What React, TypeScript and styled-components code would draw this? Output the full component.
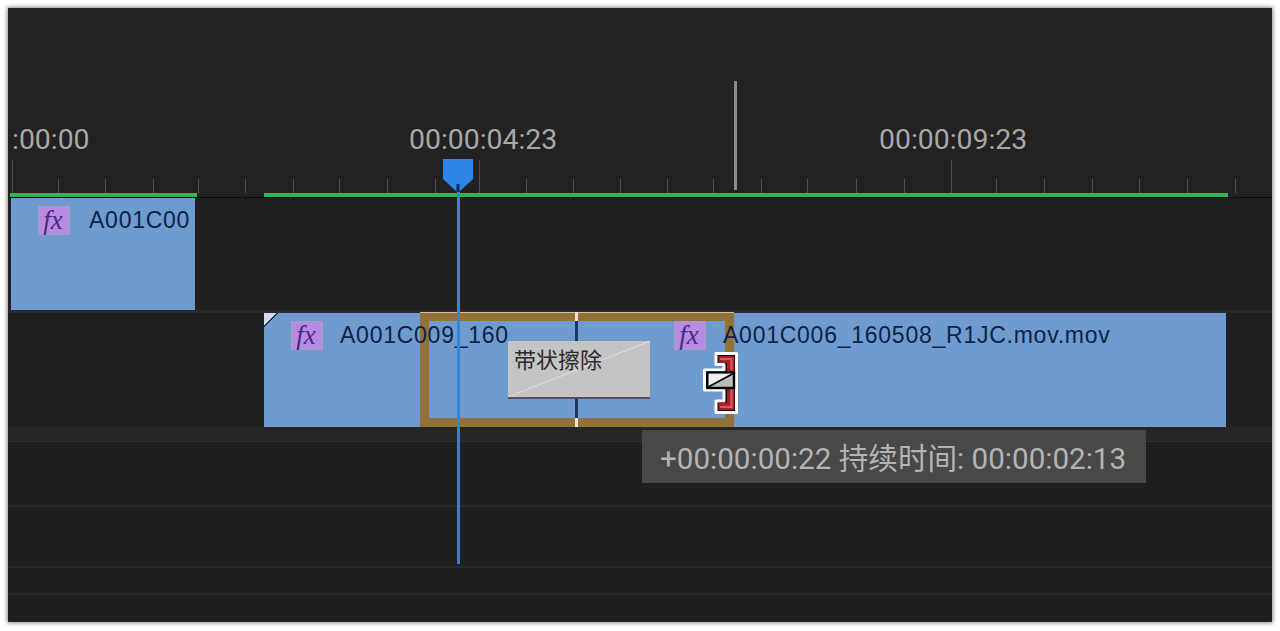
import React from 'react'
import styled, { createGlobalStyle } from 'styled-components'

const UI_FONT = '"Roboto", "Noto Sans CJK SC", sans-serif'
// ruler ticks are not quite even in the source, so keep their real x
const TICK_XS = [
    12, 58, 105, 153, 198, 245, 293, 339, 387, 435, 479, 526, 573, 620, 667, 713, 761, 807, 856, 904, 951, 996, 1044,
    1092, 1139, 1187, 1235,
]
const MAJOR_TICKS = [0, 10, 20]

const App = () => (
    <>
        <GlobalStyle />
        <Frame>
            <Ruler>
                <TimeLabel $left={4}>:00:00</TimeLabel>
                <TimeLabel $left={401}>00:00:04:23</TimeLabel>
                <TimeLabel $left={871}>00:00:09:23</TimeLabel>
                <Marker />
                <Ticks>
                    {TICK_XS.map((x, i) => (
                        <Tick key={x} $major={MAJOR_TICKS.includes(i)} $gap={i ? x - TICK_XS[i - 1] - 1 : 0} />
                    ))}
                </Ticks>
                <RenderBar>
                    <RenderSegment $width={187} />
                    <RenderSegment $width={964} $gap={67} />
                </RenderBar>
            </Ruler>

            <VideoTrack $height={115} $divider>
                <Clip $left={3} $width={184} $height={112}>
                    <ClipHead $gap={19}>
                        <FxBadge>fx</FxBadge>
                        <ClipName>A001C00</ClipName>
                    </ClipHead>
                </Clip>
            </VideoTrack>

            <VideoTrack $height={114}>
                <Clip $left={256} $width={384} $height={114} $cut>
                    <ClipHead $gap={17}>
                        <FxBadge>fx</FxBadge>
                        <ClipName>A001C009_160</ClipName>
                    </ClipHead>
                </Clip>
                <Clip $left={639} $width={579} $height={114}>
                    <ClipHead $gap={17}>
                        <FxBadge>fx</FxBadge>
                        <ClipName>A001C006_160508_R1JC.mov.mov</ClipName>
                    </ClipHead>
                </Clip>
                <Transition>
                    <CutTick $edge="top" />
                    <CutLine />
                    <CutTick $edge="bottom" />
                    <TransitionCard>
                        <TransitionName>带状擦除</TransitionName>
                    </TransitionCard>
                </Transition>
            </VideoTrack>

            <AudioGutter />
            <AudioTrack $height={65} />
            <AudioTrack $height={61} />
            <AudioTrack $height={27} />
            <AudioTrack $height={28} />

            <Playhead>
                <PlayheadHead viewBox="0 0 30 33" aria-hidden>
                    <path d="M0 0H30V20L16 33H14L0 20Z" fill="#2d86e6" />
                    <rect x="13.5" y="25" width="3" height="8" fill="#0b2a66" />
                </PlayheadHead>
                <PlayheadLine />
            </Playhead>

            <TrimCursor viewBox="0 0 36 62" aria-hidden>
                <path
                    d="M13 1.5H33.5V60.5H13V49H21V38H1.5V18H21V12.5H13Z"
                    fill="#000"
                    stroke="#fff"
                    strokeWidth="3"
                    strokeLinejoin="round"
                />
                <path d="M15.5 4H31.5V58H15.5V50.5H24V11H15.5Z" fill="#a3212b" />
                <path d="M17 7H28.5V18M28.5 37V55H17" fill="none" stroke="#e0565c" strokeWidth="2.2" />
                <rect x="4.5" y="20.5" width="26.5" height="15.5" fill="#bdbdbd" stroke="#000" strokeWidth="2.4" />
                <path d="M5.7 21.7H29.8L5.7 34.8Z" fill="#f0f0f0" />
                <path d="M5.7 34.8L29.8 21.7" stroke="#000" strokeWidth="1.6" />
            </TrimCursor>

            <DurationTip>+00:00:00:22 持续时间: 00:00:02:13</DurationTip>
        </Frame>
    </>
)

const GlobalStyle = createGlobalStyle`
    html,
    body {
        margin: 0;
        padding: 0;
        background: #fff;
    }
`
const Frame = styled.div`
    position: relative;
    box-sizing: border-box;
    display: flex;
    flex-direction: column;
    width: 1264px;
    height: 614px;
    margin: 8px;
    overflow: hidden;
    background: #222;
    box-shadow: 0 0 4px 1px #8c8c8c;
    font-family: ${UI_FONT};
`
const Ruler = styled.div`
    position: relative;
    flex: none;
    display: flex;
    flex-direction: column;
    justify-content: flex-end;
    height: 190px;
    box-sizing: border-box;
    border-bottom: 1px solid #0c0c0c;
`
const TimeLabel = styled.span<{ $left: number }>`
    position: absolute;
    left: ${(p) => p.$left}px;
    top: 114px;
    font-size: 28.4px;
    line-height: 36px;
    color: #a8a8a8;
    white-space: nowrap;
`
const Ticks = styled.div`
    display: flex;
    align-items: flex-end;
    height: 33px;
    margin-left: 4px;
`
const Tick = styled.i<{ $major: boolean; $gap: number }>`
    display: block;
    flex: none;
    width: 1px;
    height: ${(p) => (p.$major ? 33 : 14)}px;
    margin-left: ${(p) => p.$gap}px;
    background: #505050;
`
const RenderBar = styled.div`
    display: flex;
    height: 4px;
    padding-left: 2px;
`
const RenderSegment = styled.div<{ $width: number; $gap?: number }>`
    width: ${(p) => p.$width}px;
    margin-left: ${(p) => p.$gap ?? 0}px;
    background: #27ba50;
`
const Marker = styled.div`
    position: absolute;
    left: 726px;
    top: 73px;
    width: 3px;
    height: 109px;
    background: #8b8b8b;
`
const VideoTrack = styled.div<{ $height: number; $divider?: boolean }>`
    position: relative;
    flex: none;
    box-sizing: border-box;
    height: ${(p) => p.$height}px;
    background: #202020;
    box-shadow: ${(p) => (p.$divider ? 'inset 0 -3px 0 #2a2a2a' : 'none')};
`
const Clip = styled.div<{ $left: number; $width: number; $height: number; $cut?: boolean }>`
    position: absolute;
    left: ${(p) => p.$left}px;
    top: 0;
    width: ${(p) => p.$width}px;
    height: ${(p) => p.$height}px;
    background: ${(p) =>
        p.$cut
            ? 'linear-gradient(135deg, #d3dae3 0 8.5px, #1d3553 8.5px 10px, #6f9bcf 10px)'
            : '#6f9bcf'};
`
const ClipHead = styled.div<{ $gap: number }>`
    position: relative;
    z-index: 2;
    display: flex;
    align-items: center;
    gap: ${(p) => p.$gap}px;
    height: 29px;
    padding: 8px 0 0 27px;
`
const FxBadge = styled.span`
    box-sizing: border-box;
    display: flex;
    align-items: center;
    justify-content: center;
    width: 32px;
    height: 29px;
    padding-right: 2px;
    border: 2px solid #ac97d0;
    background: #b88be2;
    color: #4a2a85;
    font-family: 'Liberation Serif', serif;
    font-style: italic;
    font-size: 27px;
    line-height: 1;
`
const ClipName = styled.span`
    font-family: 'Liberation Sans', sans-serif;
    font-size: 23px;
    line-height: 29px;
    letter-spacing: 0.75px;
    color: #0c2348;
    white-space: nowrap;
`
const Transition = styled.div`
    position: absolute;
    z-index: 1;
    left: 412px;
    top: 0;
    box-sizing: border-box;
    width: 314px;
    height: 114px;
    border: 9px solid #94703a;
    border-top-width: 8px;
    box-shadow: 0 -1px 0 #cdbfa8;
`
const CutLine = styled.div`
    position: absolute;
    left: 146px;
    top: 0;
    bottom: 0;
    width: 3px;
    background: #1c3a5e;
`
const CutTick = styled.div<{ $edge: 'top' | 'bottom' }>`
    position: absolute;
    left: 146px;
    ${(p) => p.$edge}: -9px;
    width: 3px;
    height: 9px;
    background: #efe3d2;
`
const TransitionCard = styled.div`
    position: absolute;
    left: 79px;
    top: 20px;
    box-sizing: border-box;
    width: 142px;
    height: 58px;
    border-bottom: 2px solid #55506a;
    background: linear-gradient(to top left, #c4c4c4 calc(50% - 1px), #dedede 50%, #c4c4c4 calc(50% + 1px));
`
const TransitionName = styled.span`
    display: block;
    padding: 1px 0 0 6px;
    font-family: 'Noto Sans CJK SC', sans-serif;
    font-size: 22px;
    line-height: 32px;
    color: #2a2a2a;
`
const AudioGutter = styled.div`
    flex: none;
    height: 14px;
    background: #262626;
    border-bottom: 1px solid #2f2f2f;
`
const AudioTrack = styled.div<{ $height: number }>`
    flex: none;
    box-sizing: border-box;
    height: ${(p) => p.$height}px;
    background: #1f1f1f;
    border-bottom: 2px solid #2a2a2a;
`
const Playhead = styled.div`
    position: absolute;
    z-index: 3;
    left: 435px;
    top: 151px;
    display: flex;
    flex-direction: column;
    align-items: center;
    width: 30px;
`
const PlayheadHead = styled.svg`
    display: block;
    flex: none;
    width: 30px;
    height: 33px;
`
const PlayheadLine = styled.div`
    width: 3px;
    height: 372px;
    background: linear-gradient(#4a80bf 0 120px, #2f88e0 120px 234px, #3f7cc2 234px);
`
const TrimCursor = styled.svg`
    position: absolute;
    z-index: 4;
    left: 695px;
    top: 344px;
    width: 36px;
    height: 62px;
`
const DurationTip = styled.div`
    position: absolute;
    z-index: 4;
    left: 634px;
    top: 422px;
    display: flex;
    align-items: center;
    box-sizing: border-box;
    width: 504px;
    height: 53px;
    padding-left: 18px;
    background: #484848;
    color: #b4b4b4;
    font-size: 29.6px;
    white-space: nowrap;
`

export default App
